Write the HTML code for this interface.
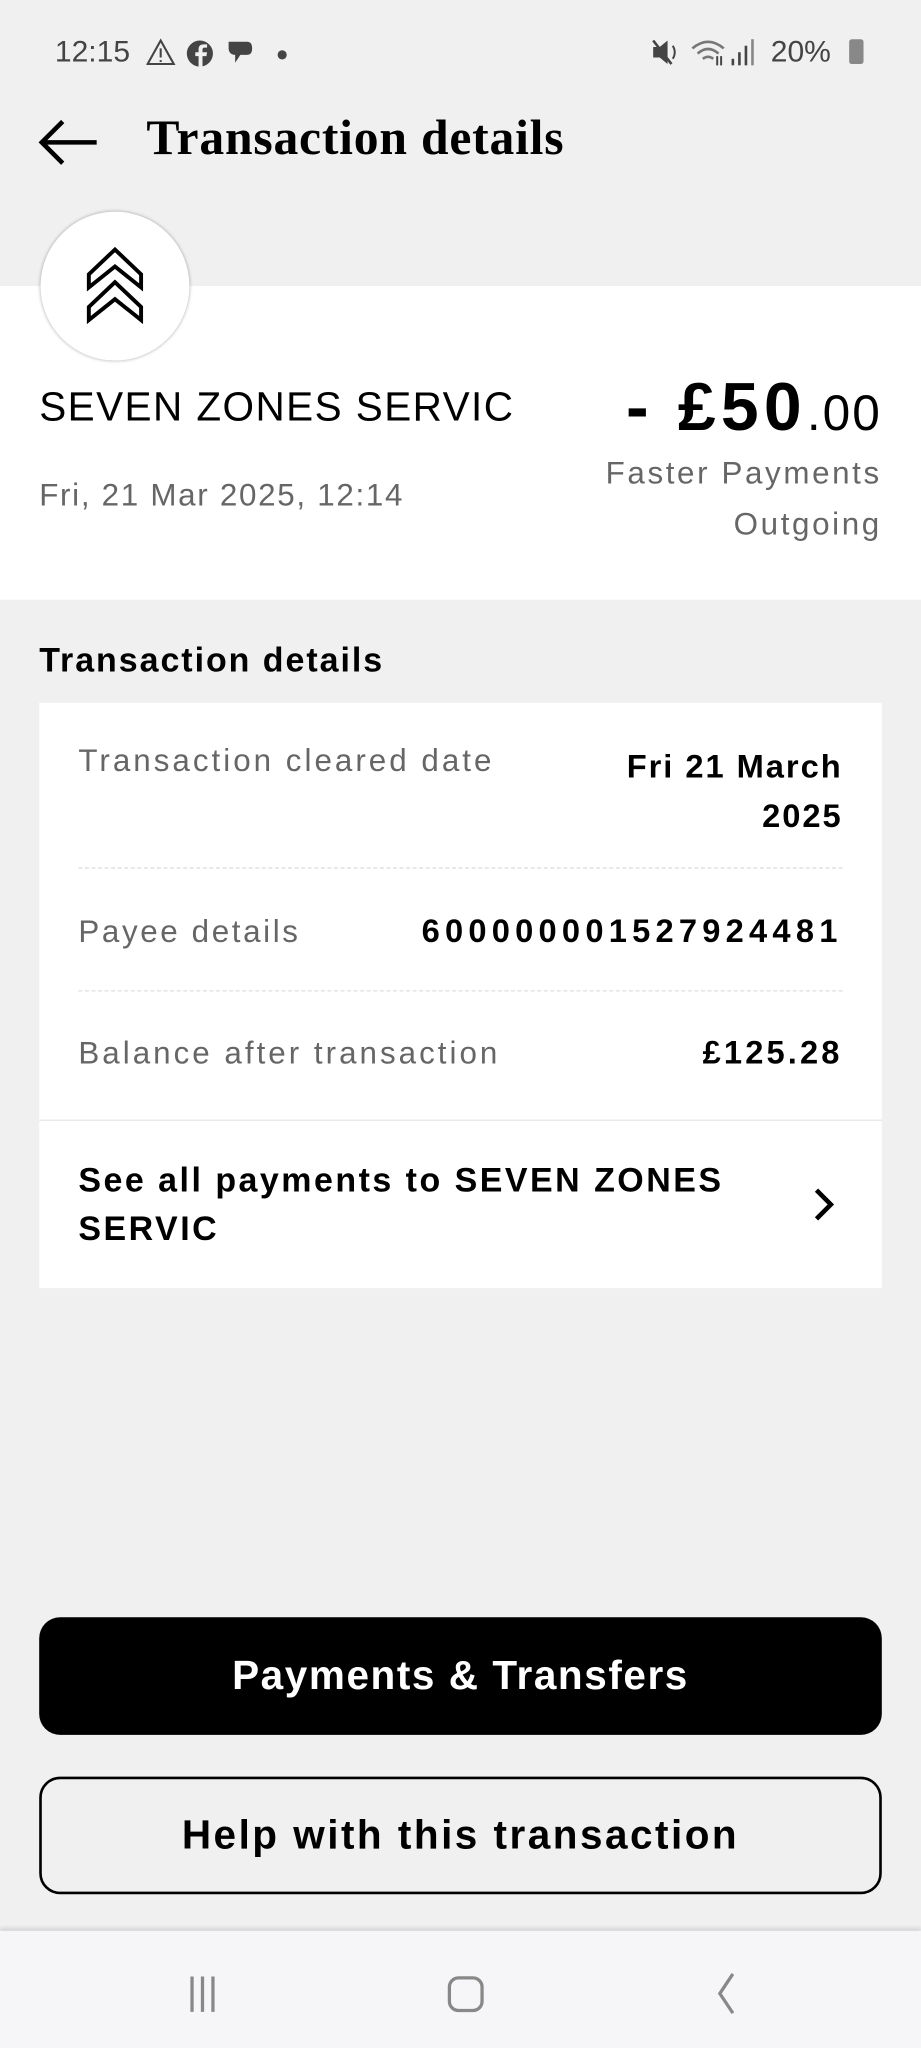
<!DOCTYPE html>
<html><head><meta charset="utf-8"><style>
html,body{margin:0;padding:0;width:921px;height:2048px;overflow:hidden;background:#f0f0f0}
#w{position:absolute;left:0;top:0;width:705px;height:1568px;transform:scale(1.30638);transform-origin:0 0;font-family:"Liberation Sans",sans-serif;color:#000}
.a{position:absolute;white-space:nowrap}
.g{color:#666}
.b{font-weight:bold}
.r{text-align:right}
</style></head><body><div id="w">
<div class="a" style="left:42px;top:26px;font-size:23px;color:#444">12:15</div>
<svg class="a" style="left:112px;top:28px" width="110" height="26" viewBox="0 0 110 26">
<path d="M11 3 L21 21 H1 Z" fill="none" stroke="#444" stroke-width="1.6"/><path d="M11 9v7M11 18v1.5" stroke="#444" stroke-width="1.6"/>
<circle cx="41" cy="13" r="10" fill="#444"/><path d="M43 23v-8h3l.5-3H43v-2c0-1 .5-1.5 1.5-1.5H46.5V6h-2.5c-3 0-4 1.5-4 4v2h-2.5v3H40v8z" fill="#f0f0f0"/>
<path d="M63 4h14c3 0 4 2 4 5s-1 5-4 5h-5l-4 6v-6c-3 0-5-2-5-5s0-5 0-5z" fill="#444"/>
<circle cx="104" cy="14" r="3.5" fill="#444"/></svg>
<svg class="a" style="left:498px;top:27px" width="90" height="26" viewBox="0 0 90 26">
<path d="M2 9h5l6-5v18l-6-5H2z" fill="#444"/><path d="M2 4l14 18" stroke="#444" stroke-width="2"/><path d="M17 8q3 5 0 10" stroke="#444" fill="none" stroke-width="1.5"/>
<path d="M32 10q12-10 24 0M36 14q8-7 16 0M40 18q4-3 8 0" stroke="#777" fill="none" stroke-width="2"/><path d="M51 16v7M54 23v-7" stroke="#444" stroke-width="1.5"/>
<rect x="62" y="18" width="2" height="5" fill="#444"/><rect x="67" y="13" width="2" height="10" fill="#444"/><rect x="72" y="8" width="2" height="15" fill="#444"/><rect x="77" y="3" width="2" height="20" fill="#888"/></svg>
<div class="a" style="left:590px;top:26px;font-size:23px;color:#444">20%</div>
<div class="a" style="left:650px;top:30px;width:11px;height:19px;background:#888;border-radius:2px"></div>
<svg class="a" style="left:28px;top:90px" width="48" height="38" viewBox="0 0 48 38"><path d="M46 19H4M20 3L4 19l16 16" fill="none" stroke="#000" stroke-width="3.5"/></svg>
<div class="a b" style="left:112px;top:84px;font-size:38px;font-family:'Liberation Serif',serif;letter-spacing:0.6px">Transaction details</div>
<div class="a" style="left:0;top:219px;width:705px;height:240px;background:#fff"></div>
<div class="a" style="left:31px;top:162px;width:114px;height:114px;border-radius:50%;background:#fff;box-shadow:0 0 3px rgba(0,0,0,.35)"></div>
<svg class="a" style="left:62px;top:188px" width="52" height="62" viewBox="0 0 52 62"><path d="M26 3L46 22V32L26 16L6 32V22Z M26 28L46 47V57L26 41L6 57V47Z" fill="none" stroke="#000" stroke-width="3" stroke-linejoin="miter"/></svg>
<div class="a" style="left:30px;top:294px;font-size:31px;letter-spacing:1.1px">SEVEN ZONES SERVIC</div>
<div class="a g" style="left:30px;top:366px;font-size:24px;letter-spacing:1.3px">Fri, 21 Mar 2025, 12:14</div>
<div class="a r" style="right:30px;top:282px;font-size:52px;letter-spacing:4px"><span class="b">- £50</span><span style="font-size:38px;letter-spacing:1.5px">.00</span></div>
<div class="a g r" style="right:30px;top:343px;font-size:24px;line-height:39px;letter-spacing:2px">Faster Payments<br>Outgoing</div>
<div class="a b" style="left:30px;top:490px;font-size:26px;letter-spacing:1.5px">Transaction details</div>
<div class="a" style="left:30px;top:538px;width:645px;height:448px;background:#fff">
<div class="a g" style="left:30px;top:31px;font-size:24px;letter-spacing:2.3px">Transaction cleared date</div>
<div class="a b r" style="right:30px;top:30px;font-size:25px;line-height:38px;letter-spacing:1.5px">Fri 21 March<br>2025</div>
<div class="a" style="left:30px;right:30px;top:126px;border-top:1px dashed #ddd"></div>
<div class="a g" style="left:30px;top:162px;font-size:24px;letter-spacing:2px">Payee details</div>
<div class="a b r" style="right:30px;top:161px;font-size:25px;letter-spacing:4px">600000001527924481</div>
<div class="a" style="left:30px;right:30px;top:220px;border-top:1px dashed #ddd"></div>
<div class="a g" style="left:30px;top:255px;font-size:24px;letter-spacing:2.3px">Balance after transaction</div>
<div class="a b r" style="right:30px;top:254px;font-size:25px;letter-spacing:2.4px">£125.28</div>
<div class="a" style="left:0;right:0;top:319px;border-top:1px solid #e6e6e6"></div>
<div class="a b" style="left:30px;top:347px;font-size:26px;line-height:37px;letter-spacing:1.9px">See all payments to SEVEN ZONES<br>SERVIC</div>
<svg class="a" style="left:590px;top:370px" width="20" height="28" viewBox="0 0 20 28"><path d="M5 3l11 11L5 25" fill="none" stroke="#000" stroke-width="3.5"/></svg>
</div>
<div class="a b" style="left:30px;top:1238px;width:645px;height:90px;background:#000;border-radius:16px;color:#fff;font-size:31px;text-align:center;line-height:90px;letter-spacing:1.2px">Payments &amp; Transfers</div>
<div class="a b" style="left:30px;top:1360px;width:641px;height:86px;border:2px solid #000;border-radius:16px;font-size:31px;text-align:center;line-height:86px;background:#f0f0f0;letter-spacing:1.9px">Help with this transaction</div>
<div class="a" style="left:0;top:1478px;width:705px;height:90px;background:#f6f6f8;box-shadow:0 -2px 3px rgba(0,0,0,.12)"></div>
<svg class="a" style="left:140px;top:1505px" width="430" height="42" viewBox="0 0 430 42"><path d="M7 8v27M15 8v27M23 8v27" stroke="#888" stroke-width="2.5"/><rect x="204" y="9" width="25" height="25" rx="7" fill="none" stroke="#888" stroke-width="2.5"/><path d="M421 6L411 21l10 15" fill="none" stroke="#888" stroke-width="2.5"/></svg>
</div></body></html>
